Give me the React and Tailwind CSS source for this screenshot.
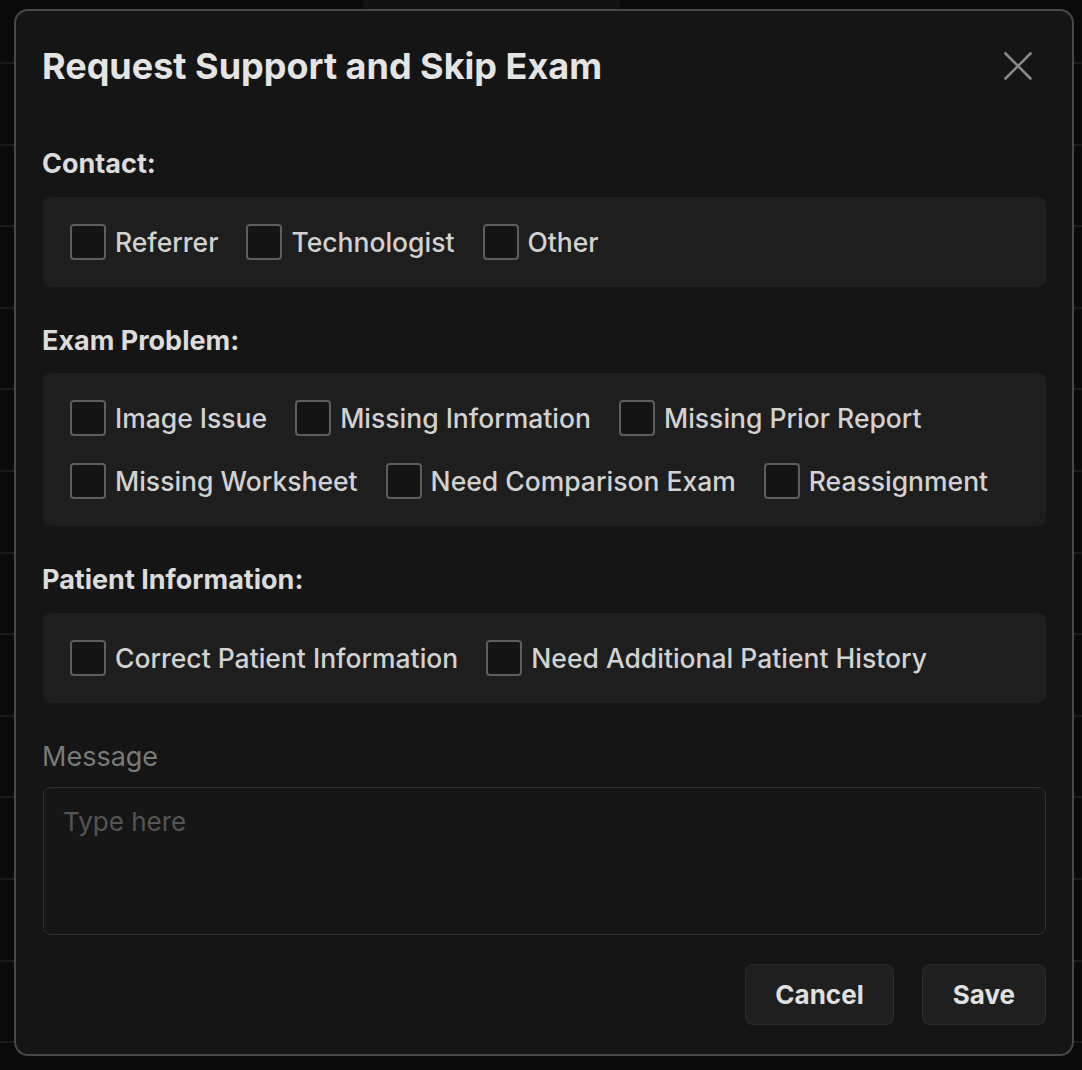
import React from 'react';

const FONT = { fontFamily: 'Inter, "Noto Sans", sans-serif' };

function Check({ label }) {
    return (
        <label className="flex items-center gap-[9px] cursor-pointer">
            <span className="w-[36px] h-[36px] shrink-0 rounded-[4px] border-2 border-[#5e5e5e] bg-[#141414]" />
            <span className="text-[26.5px] leading-[32px] font-medium text-[#d2d2d2]">{label}</span>
        </label>
    );
}

function Group({ rows }) {
    return (
        <div className="bg-[#1e1e1e] rounded-[8px] px-[27px] py-[27px] flex flex-col gap-[27px]">
            {rows.map((row, i) => (
                <div key={i} className="flex items-center gap-[28px]">
                    {row.map((item) => (
                        <Check key={item} label={item} />
                    ))}
                </div>
            ))}
        </div>
    );
}

function SectionLabel({ children, className = '' }) {
    return (
        <div className={'text-[27px] leading-[32px] font-bold text-[#dcdcdc] ' + className}>
            {children}
        </div>
    );
}

export default function App() {
    const lines = Array.from({ length: 13 });

    return (
        <div className="relative w-[1082px] h-[1070px] overflow-hidden bg-[#0a0a0a]" style={FONT}>
            {/* page behind the modal */}
            <div className="flex flex-col">
                <div className="h-[64px] border-b-2 border-[#1a1a1a] flex">
                    <div className="ml-[363px] w-[257px] bg-[#121212]" />
                </div>
                {lines.map((_, i) => (
                    <div key={i} className="h-[81.6px] border-b-2 border-[#1a1a1a]" />
                ))}
            </div>

            {/* modal */}
            <div className="absolute left-[14px] top-[9px] w-[1060px] h-[1047px] rounded-[14px] border-2 border-[#484848] bg-[#151515] px-[26px] pt-[33px] pb-[28px] flex flex-col">
                <div className="flex items-center justify-between h-[44px]">
                    <h1 className="text-[36px] leading-[44px] font-bold text-[#e4e4e4]">
                        Request Support and Skip Exam
                    </h1>
                    <button type="button" className="mr-[14px]">
                        <svg width="28" height="28" viewBox="0 0 28 28" fill="none">
                            <path d="M1.5 1.5 L26.5 26.5 M26.5 1.5 L1.5 26.5" stroke="#8a8a8a" strokeWidth="2.6" strokeLinecap="round" />
                        </svg>
                    </button>
                </div>

                <SectionLabel className="mt-[60px]">Contact:</SectionLabel>
                <div className="mt-[17px] ml-[1px]">
                    <Group rows={[['Referrer', 'Technologist', 'Other']]} />
                </div>

                <SectionLabel className="mt-[38px]">Exam Problem:</SectionLabel>
                <div className="mt-[16px] ml-[1px]">
                    <Group
                        rows={[
                            ['Image Issue', 'Missing Information', 'Missing Prior Report'],
                            ['Missing Worksheet', 'Need Comparison Exam', 'Reassignment'],
                        ]}
                    />
                </div>

                <SectionLabel className="mt-[38px]">Patient Information:</SectionLabel>
                <div className="mt-[17px] ml-[1px]">
                    <Group rows={[['Correct Patient Information', 'Need Additional Patient History']]} />
                </div>

                <div className="mt-[38px] text-[27px] leading-[32px] text-[#7a7a7a]">Message</div>
                <textarea
                    placeholder="Type here"
                    className="mt-[14px] ml-[1px] h-[148px] shrink-0 resize-none rounded-[8px] border-[1.5px] border-[#313131] bg-[#161616] px-[19px] pt-[18px] text-[26px] leading-[32px] text-[#d2d2d2] placeholder:text-[#555555] outline-none"
                    style={FONT}
                />

                <div className="mt-[29px] flex justify-end gap-[28px]">
                    <button
                        type="button"
                        className="h-[61px] px-[29px] rounded-[8px] border border-[#2c2c2c] bg-[#1f1f1f] text-[26px] font-bold text-[#e0e0e0]"
                    >
                        Cancel
                    </button>
                    <button
                        type="button"
                        className="h-[61px] px-[30px] rounded-[8px] border border-[#2c2c2c] bg-[#1f1f1f] text-[26px] font-bold text-[#e0e0e0]"
                    >
                        Save
                    </button>
                </div>
            </div>
        </div>
    );
}
